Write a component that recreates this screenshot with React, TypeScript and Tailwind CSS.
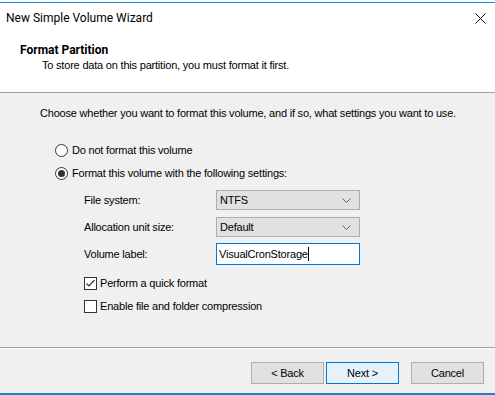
import React from "react";

const titleFont = { fontFamily: 'Roboto, "Segoe UI", Arial, sans-serif' };
const bodyFont = { fontFamily: '"Liberation Sans", Arial, sans-serif', letterSpacing: "-0.2px" };

function Chevron() {
  return (
    <svg width="9" height="6" viewBox="0 0 9 6" className="absolute right-[8px] top-[7px]">
      <path d="M0.5 0.5 L4.5 4.5 L8.5 0.5" fill="none" stroke="#606060" strokeWidth="1" />
    </svg>
  );
}

function Select({ value }: { value: string }) {
  return (
    <div className="relative w-[144px] h-[20px] bg-[#e1e1e1] border border-[#adadad] flex items-center pl-[3px] text-black">
      {value}
      <Chevron />
    </div>
  );
}

function Radio({ checked }: { checked?: boolean }) {
  return (
    <div className="w-[13px] h-[13px] rounded-full border border-[#333] bg-white flex items-center justify-center shrink-0">
      {checked && <div className="w-[7px] h-[7px] rounded-full bg-[#333]" />}
    </div>
  );
}

function Check({ checked }: { checked?: boolean }) {
  return (
    <div className="relative w-[13px] h-[13px] border border-[#333] bg-white shrink-0">
      {checked && (
        <svg width="11" height="11" viewBox="0 0 11 11" className="absolute left-0 top-0">
          <path d="M1.5 5.5 L4 8 L9.5 2" fill="none" stroke="#333" strokeWidth="1.2" />
        </svg>
      )}
    </div>
  );
}

function Button({ label, primary }: { label: string; primary?: boolean }) {
  return (
    <div
      className={
        "w-[73px] h-[22px] flex items-center justify-center text-black border " +
        (primary ? "bg-[#e5f1fb] border-[#0078d7]" : "bg-[#e1e1e1] border-[#adadad]")
      }
    >
      {label}
    </div>
  );
}

export default function App() {
  return (
    <div className="w-[495px] h-[395px] flex flex-col bg-white overflow-hidden text-black" style={titleFont}>
      <div className="h-[2px] bg-white" />
      <div className="h-[1px] bg-[#1883d7]" />
      {/* title bar */}
      <div className="h-[30px] flex items-center justify-between pl-[6px] pr-[9px] text-[12px]">
        <span>New Simple Volume Wizard</span>
        <svg width="11" height="11" viewBox="0 0 11 11">
          <path d="M0.5 0.5 L10.5 10.5 M10.5 0.5 L0.5 10.5" stroke="#111" strokeWidth="1" />
        </svg>
      </div>
      {/* header */}
      <div className="h-[59px] flex flex-col pt-[10px] text-[12px]">
        <div className="pl-[20px] font-bold leading-[14px]">Format Partition</div>
        <div className="pl-[42px] leading-[16px] text-[11px]" style={bodyFont}>
          To store data on this partition, you must format it first.
        </div>
      </div>
      <div className="h-[1px] bg-[#a0a0a0]" />
      {/* body */}
      <div className="flex-1 bg-[#f0f0f0] flex flex-col text-[11px] pl-[40px] pt-[12px]" style={bodyFont}>
        <div className="leading-[16px] whitespace-nowrap">Choose whether you want to format this volume, and if so, what settings you want to use.</div>
        <div className="flex items-center gap-[4px] pl-[15px] mt-[21px] h-[16px]">
          <Radio />
          <span>Do not format this volume</span>
        </div>
        <div className="flex items-center gap-[4px] pl-[15px] mt-[7px] h-[16px]">
          <Radio checked />
          <span>Format this volume with the following settings:</span>
        </div>
        <div className="pl-[44px] mt-[9px] flex flex-col gap-[7px]">
          <div className="flex items-center h-[20px]">
            <span className="w-[132px]">File system:</span>
            <Select value="NTFS" />
          </div>
          <div className="flex items-center h-[20px]">
            <span className="w-[132px]">Allocation unit size:</span>
            <Select value="Default" />
          </div>
          <div className="flex items-center h-[22px] -mt-[1px]">
            <span className="w-[132px]">Volume label:</span>
            <div className="w-[144px] h-[22px] bg-white border border-[#0078d7] flex items-center pl-[2px]">
              <span>VisualCronStorage</span>
              <span className="w-[1px] h-[14px] bg-black" />
            </div>
          </div>
        </div>
        <div className="pl-[44px] mt-[10px] flex items-center gap-[3px] h-[16px]">
          <Check checked />
          <span>Perform a quick format</span>
        </div>
        <div className="pl-[44px] mt-[7px] flex items-center gap-[3px] h-[16px]">
          <Check />
          <span>Enable file and folder compression</span>
        </div>
      </div>
      <div className="h-[1px] bg-[#a0a0a0]" />
      <div className="h-[1px] bg-white" />
      {/* footer */}
      <div className="h-[44px] bg-[#f0f0f0] flex items-start pt-[13px] pl-[251px] text-[11px]" style={bodyFont}>
        <Button label="< Back" />
        <div className="w-[2px]" />
        <Button label="Next >" primary />
        <div className="w-[12px]" />
        <Button label="Cancel" />
      </div>
      <div className="h-[2px] bg-[#1883d7]" />
    </div>
  );
}
